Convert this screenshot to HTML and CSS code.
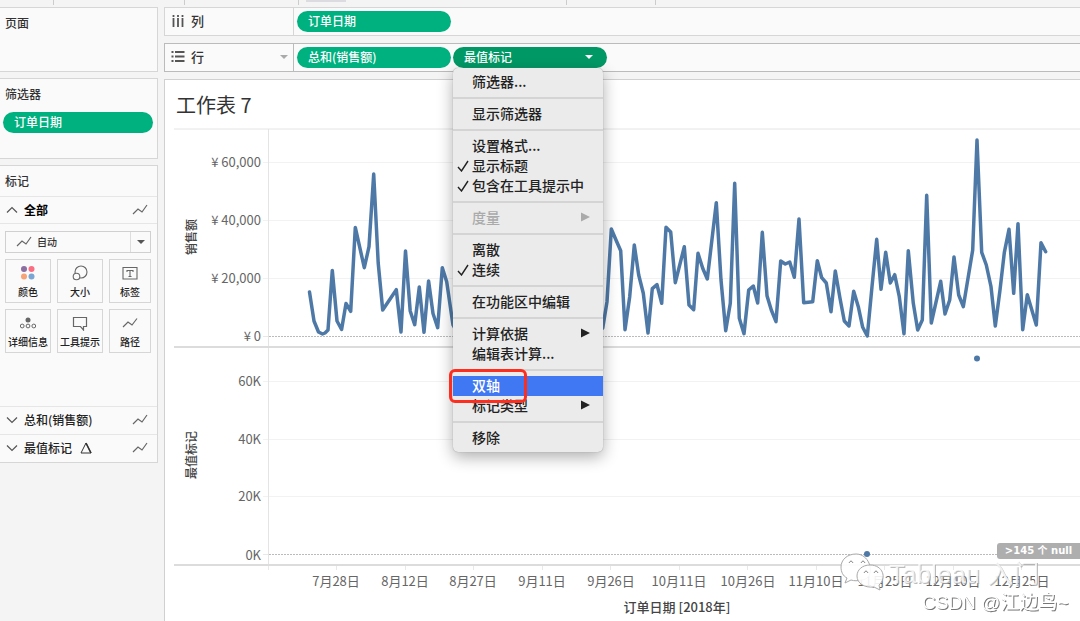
FILE: index.html
```html
<!DOCTYPE html>
<html lang="zh-CN">
<head>
<meta charset="utf-8">
<title>工作表 7</title>
<link rel="stylesheet" href="styles.css">
</head>
<body>
<svg class="defs" aria-hidden="true">
  <symbol id="line-icon" viewBox="0 0 16 12"><path d="M1 10 L6 5 L10 8 L15 1" fill="none" stroke="#666" stroke-width="1.2"/></symbol>
  <symbol id="chevron" viewBox="0 0 12 8"><path d="M1 1.5 L6 6.5 L11 1.5" fill="none" stroke="#555" stroke-width="1.2"/></symbol>
  <symbol id="check" viewBox="0 0 12 12"><path d="M1 7 L4.5 11 L11 1" fill="none" stroke="#222" stroke-width="1.4"/></symbol>
  <symbol id="arrow" viewBox="0 0 9 10"><path d="M0 0.5 L9 5 L0 9.5Z" fill="currentColor"/></symbol>
</svg>
<div class="toolbar"><span class="w53"></span><span class="w131"></span><span class="w115"></span><span class="w268"><i></i></span><span class="w89"></span></div>
<div class="workspace">
  <aside class="side">
    <section class="card pages"><h2>页面</h2></section>
    <section class="card filters"><h2>筛选器</h2><button class="pill">订单日期</button></section>
    <section class="card marks">
      <h2>标记</h2>
      <button class="row open"><svg class="chev up"><use href="#chevron"/></svg><span>全部</span><svg class="li"><use href="#line-icon"/></svg></button>
      <div class="mark-body">
        <div class="select">
          <svg class="li"><use href="#line-icon"/></svg>
          <select aria-label="标记类型"><option>自动</option></select>
          <span class="tri"></span>
        </div>
        <div class="tiles">
          <button><svg viewBox="0 0 16 16"><circle cx="4" cy="4" r="3" fill="#8a6fa0"/><circle cx="11.500" cy="4" r="3" fill="#fb6e82"/><circle cx="4" cy="11.500" r="3" fill="#f7a277"/><circle cx="11.500" cy="11.500" r="3" fill="#7ba5d2"/></svg>颜色</button>
          <button><svg viewBox="0 0 16 16"><g fill="#fafafa" stroke="#666" stroke-width="1.1"><circle cx="9" cy="7" r="6"/><circle cx="4.500" cy="11.500" r="3.300"/></g></svg>大小</button>
          <button><svg viewBox="0 0 16 16"><path d="M1 2.500H15V14H1Z M5 7V5.500H11V7 M8 5.500V11.500 M6.500 11.500H9.500" fill="none" stroke="#666" stroke-width="1.1"/></svg>标签</button>
          <button><svg viewBox="0 0 16 16"><circle cx="8" cy="5" r="2.500" fill="#666"/><g fill="none" stroke="#666"><circle cx="2.200" cy="11" r="1.900"/><circle cx="8" cy="11" r="1.900"/><circle cx="13.800" cy="11" r="1.900"/></g></svg>详细信息</button>
          <button><svg viewBox="0 0 16 16"><path d="M1.500 2.500H14.500V11.500H11.500V15L8.500 11.500H1.500Z" fill="none" stroke="#666" stroke-width="1.200"/></svg>工具提示</button>
          <button><svg viewBox="0 0 16 16"><path d="M1 12 L6 7 L10 10 L15 3.500" fill="none" stroke="#666" stroke-width="1.200"/></svg>路径</button>
        </div>
      </div>
      <button class="row"><svg class="chev"><use href="#chevron"/></svg><span>总和(销售额)</span><svg class="li"><use href="#line-icon"/></svg></button>
      <button class="row"><svg class="chev"><use href="#chevron"/></svg><span>最值标记</span><svg class="delta" viewBox="0 0 12 12"><path d="M6 1L11 11H1Z" fill="none" stroke="#333"/><path d="M6 1L11 11" stroke="#333" stroke-width="1.600"/></svg><svg class="li"><use href="#line-icon"/></svg></button>
    </section>
  </aside>
  <main class="main">
    <div class="shelf">
      <div class="shelf-label"><svg viewBox="0 0 14 14"><path d="M2.500 1V3M7 1V3M11.500 1V3M2.500 4V13M7 4V13M11.500 4V13" stroke="#555" stroke-width="1.800"/></svg>列</div>
      <div class="pills"><button class="pill">订单日期</button></div>
    </div>
    <div class="shelf active">
      <button class="shelf-label"><svg viewBox="0 0 14 14"><path d="M0.500 2H2.500M0.500 6.500H2.500M0.500 11H2.500M4 2H13.500M4 6.500H13.500M4 11H13.500" stroke="#555" stroke-width="1.800"/></svg>行<span class="tri light"></span></button>
      <div class="pills">
        <button class="pill">总和(销售额)</button>
        <div class="pill-wrap">
          <button class="pill dark">最值标记<span class="tri white"></span></button>
          <div class="menu" role="menu">
            <button role="menuitem">筛选器...</button>
            <hr>
            <button role="menuitem">显示筛选器</button>
            <hr>
            <button role="menuitem">设置格式...</button>
            <button role="menuitem"><svg class="tick"><use href="#check"/></svg>显示标题</button>
            <button role="menuitem"><svg class="tick"><use href="#check"/></svg>包含在工具提示中</button>
            <hr>
            <button role="menuitem" class="off">度量<svg class="sub"><use href="#arrow"/></svg></button>
            <hr>
            <button role="menuitem">离散</button>
            <button role="menuitem"><svg class="tick"><use href="#check"/></svg>连续</button>
            <hr>
            <button role="menuitem">在功能区中编辑</button>
            <hr>
            <button role="menuitem">计算依据<svg class="sub"><use href="#arrow"/></svg></button>
            <button role="menuitem">编辑表计算...</button>
            <hr>
            <button role="menuitem" class="on">双轴<span class="ring"></span></button>
            <button role="menuitem">标记类型<svg class="sub"><use href="#arrow"/></svg></button>
            <hr>
            <button role="menuitem">移除</button>
          </div>
        </div>
      </div>
    </div>
    <section class="view">
      <h1>工作表 7</h1>
      <svg class="chart" viewBox="165 128 915 493">
        <g class="grid">
          <path d="M263 162.500H1080M263 220.500H1080M263 278.500H1080M263 381.500H1080M263 439.500H1080M263 496.500H1080"/>
          <path class="tickmark" d="M263 336.500H268M263 554.500H268M268.500 565V570M336.500 565V570M405.500 565V570M473.500 565V570M542.500 565V570M610.500 565V570M679.500 565V570M747.500 565V570M816.500 565V570M884.500 565V570M953.500 565V570M1021.500 565V570"/>
          <path class="frame" d="M174 129H1080M268.500 129V565"/>
          <path class="rule" d="M174 347H1080M174 565H1080"/>
          <path class="zero" d="M269 336.500H1080M269 554.500H1080"/>
        </g>
        <polyline class="series" points="309.500,292 314,321 318.500,332 322.500,334 325,333 328,330 332.300,270.500 337,321 341.600,329.500 346,303.500 350.700,311.300 355.300,227.500 364.300,267.700 369,246.700 373.700,174 378.200,263 382.700,310 396.300,289.700 401,332 405.500,251 410.200,311 414.700,324.700 419.300,287 424,332.300 428.600,281 433,313.500 437.700,327.700 442.300,267.700 446.700,281.700 453,325 457,332 602.700,328.300 607,301.700 611.300,229 616,240 620.700,250.700 625,329.700 629.700,296.700 634.300,245 638.700,275 643.300,293.300 648,333 652.300,288.700 657,284.700 661.700,303.300 666,227.300 670.700,232 675.300,282.700 684.300,246.700 689,305 693.700,309.700 698,253.300 702.700,268.300 707.300,279 716.300,202.700 721,280 725.700,330.700 730.300,303.300 734.700,183.300 739.300,318.300 744,333.700 748.700,290 753.300,286 757.700,303 762.300,232.300 767,295.700 771.300,310 776,321.700 780.700,261 785.300,264 789.700,262 794.300,277.300 799,219 803.700,302.700 812.700,301.700 817.300,260.700 821.700,277.700 826.300,283 831,311.700 835.300,271 840,298.300 844.300,321 849,326 853.700,291.300 858.300,306.700 862.700,327.300 867.300,336 872,286.700 876.700,239.300 881,289.300 885.700,252.300 890.300,283 894.700,274.700 899.300,296.700 904,333.700 908.300,250.700 913.300,303.300 917.700,330 922.300,320 926.700,195.300 931.300,323 940.700,281.300 945,314 949.700,300 954,257 958.700,295 963.300,306.700 972.700,250 977,140 981.700,252.300 986.300,265 991,286.700 995.300,326 1000,290 1004.300,252.700 1009,229.300 1013.700,293.300 1018,223.700 1022.700,329.700 1027.300,294.700 1036.300,325 1041,242.700 1045.700,251.700"/>
        <circle class="dot" cx="977" cy="358.500" r="3"/>
        <circle class="dot" cx="867" cy="554" r="3"/>
        <g class="ylab">
          <text x="261" y="167">¥ 60,000</text><text x="261" y="225">¥ 40,000</text><text x="261" y="283">¥ 20,000</text><text x="261" y="341">¥ 0</text>
          <text x="261" y="386">60K</text><text x="261" y="444">40K</text><text x="261" y="501">20K</text><text x="261" y="560">0K</text>
        </g>
        <g class="xlab">
          <text x="336" y="586">7月28日</text><text x="405" y="586">8月12日</text><text x="473" y="586">8月27日</text><text x="542" y="586">9月11日</text><text x="611" y="586">9月26日</text><text x="679" y="586">10月11日</text><text x="748" y="586">10月26日</text><text x="816" y="586">11月10日</text><text x="885" y="586">11月25日</text><text x="953" y="586">12月10日</text><text x="1022" y="586">12月25日</text>
        </g>
        <g class="title">
          <text class="wide" x="677" y="612">订单日期 [2018年]</text>
          <text transform="translate(196 237) rotate(-90)">销售额</text>
          <text transform="translate(196 455) rotate(-90)">最值标记</text>
        </g>
        <g class="wechat">
          <path d="M856 554C847 554 841 560 841 567C841 572 843 576 847 578L845 583L851 580C854 581 858 581 861 580C876 580 872 554 856 554Z"/>
          <path d="M870 565C862 565 857 570 857 576C857 583 864 588 874 587L880 590L879 585C887 578 883 565 870 565Z"/>
          <path class="eyes" d="M849 563Q851 559 853 563M861 563Q863 559 865 563M864 573Q866 569 868 573M874 573Q876 569 878 573"/>
        </g>
        <text class="mark-big" x="889" y="583">Tableau 入门</text>
        <text class="mark-small" x="922" y="609">CSDN @江边鸟~</text>
      </svg>
      <button class="nulls">&gt;145 个 null</button>
    </section>
  </main>
</div>
</body>
</html>
```
FILE: styles.css
```css
* { box-sizing: border-box; }
body {
  margin: 0;
  background: #f4f4f4;
  color: #333;
  font: 12px/18px "Noto Sans CJK SC", "Noto Sans", sans-serif;
  font-weight: 500;
}
button, select { font: inherit; color: inherit; background: none; border: 0; padding: 0; text-align: left; }
h1, h2 { margin: 0; font-weight: 500; }
.defs { position: absolute; width: 0; height: 0; }

.toolbar { display: flex; height: 7px; overflow: hidden; }
.toolbar span { height: 5px; border-right: 1px solid #ccc; flex: none; }
.toolbar i { display: block; width: 40px; height: 2px; margin-left: 7px; background: #dcdce0; }
.w53 { width: 54px; }
.w131 { width: 131px; }
.w115 { width: 114px; }
.w268 { width: 268px; }
.w89 { width: 89px; }

.workspace { display: flex; gap: 6px; }
.side { flex: none; width: 158px; display: flex; flex-direction: column; gap: 6px; }
.card { background: #fafafa; border: 1px solid #d6d6d6; border-left: 0; }
.card h2 { font-size: 12px; line-height: 18px; padding: 6px 5px 0; }
.pages { height: 65px; }
.filters { height: 81px; }
.filters .pill { width: 150px; margin: 9px 3px 0; }
.marks h2 { padding-bottom: 6px; }

.pill {
  display: flex;
  align-items: center;
  width: 154px;
  height: 21px;
  padding: 0 11px 1px;
  border-radius: 11px;
  background: #00b180;
  color: #fff;
}
.dark { background: #009966; justify-content: space-between; }
.tri { flex: none; width: 0; height: 0; border: 4px solid transparent; border-top: 4px solid #555; border-bottom: 0; }
.tri.white { border-top-color: #fff; margin-right: 3px; }
.tri.light { border-top-color: #aaa; margin-left: auto; }

.row {
  display: flex;
  align-items: center;
  width: 100%;
  height: 28px;
  padding: 0 9px 1px 6px;
  border-top: 1px solid #e6e6e6;
  color: #222;
}
.row.open { border-bottom: 1px solid #e6e6e6; color: #000; font-weight: 700; padding-bottom: 0; }
.row span { margin-left: 6px; }
.chev { width: 12px; height: 8px; }
.up { transform: rotate(180deg); }
.li { width: 16px; height: 12px; }
.row .li { margin-left: auto; }
.delta { width: 12px; height: 12px; margin-left: 8px; }

.mark-body { padding: 7px 6px 53px 5px; font-size: 10px; }
.select { position: relative; height: 22px; border: 1px solid #d0d0d0; }
.select select { appearance: none; width: 100%; height: 20px; padding-left: 31px; line-height: 18px; }
.select .li { position: absolute; left: 10px; top: 4px; }
.select .tri { position: absolute; right: 5px; top: 8px; }
.select::after { content: ""; position: absolute; right: 19px; top: 0; height: 20px; border-left: 1px solid #ddd; }
.tiles { display: grid; grid-template-columns: 46px 46px 1fr; gap: 6px; padding-top: 6px; }
.tiles button {
  display: flex;
  flex-direction: column;
  align-items: center;
  height: 44px;
  padding-top: 5px;
  border: 1px solid #d6d6d6;
  line-height: 18px;
  color: #222;
  white-space: nowrap;
}
.tiles svg { width: 16px; height: 16px; flex: none; margin-bottom: 2px; }

.main { flex: 1; min-width: 0; display: flex; flex-direction: column; gap: 7px; }
.shelf { display: flex; height: 29px; border: 1px solid #d6d6d6; border-right: 0; background: #fafafa; }
.shelf-label {
  display: flex;
  align-items: center;
  gap: 6px;
  width: 129px;
  padding: 0 5px 1px 6px;
  border-right: 1px solid #d6d6d6;
  font-size: 13px;
}
.shelf-label svg { width: 14px; height: 14px; }
.active, .active .shelf-label { border-color: #bbb; }
.pills { display: flex; gap: 2px; padding: 3px; }
.pill-wrap { position: relative; height: 21px; }

.menu {
  position: absolute;
  z-index: 5;
  top: 21px;
  left: 0;
  width: 150px;
  padding: 4px 0;
  border-radius: 5px;
  background: #ebebeb;
  box-shadow: 0 0 1px #888, 0 5px 16px rgba(0, 0, 0, 0.32);
  color: #222;
}
.menu button {
  position: relative;
  display: block;
  width: 100%;
  height: 20px;
  padding: 0 0 2px 19px;
  font-size: 14px;
  line-height: 18px;
  white-space: nowrap;
}
.menu hr { height: 2px; margin: 5px 0; border: 0; background: #d4d4d4; }
.menu .off { color: #aaa; }
.menu .on { background: #4077f2; color: #fff; z-index: 1; }
.tick { position: absolute; left: 4px; top: 4px; width: 12px; height: 12px; }
.sub { position: absolute; right: 13px; top: 4px; width: 9px; height: 10px; }
.ring { position: absolute; left: -4px; top: -7px; width: 78px; height: 34px; border: 3px solid #fc2e20; border-radius: 6px; }

.view { position: relative; border: 1px solid #d0d0d0; border-width: 1px 0 0 1px; background: #fff; }
.view h1 { height: 48px; padding: 10px 11px 0; font-size: 20px; line-height: 30px; font-weight: 400; }
.chart { display: block; width: 100%; height: auto; }
.chart path { fill: none; }
.grid path { stroke: #f2f2f2; }
.grid .tickmark { stroke: #e8e8e8; }
.grid .frame { stroke: #e4e4e4; }
.grid .rule { stroke: #dcdcdc; stroke-width: 2; }
.grid .zero { stroke: #bbb; stroke-dasharray: 2 1; }
.series { fill: none; stroke: #4e79a7; stroke-width: 3.5; stroke-linejoin: round; stroke-linecap: round; }
.dot { fill: #4e79a7; }
.ylab, .xlab { fill: #666; font-size: 13px; font-weight: 400; }
.ylab { text-anchor: end; }
.xlab, .title { text-anchor: middle; }
.title { fill: #444; font-size: 12px; }
.title .wide { font-size: 13px; }
.chart .wechat path { fill: #fff; fill-opacity: 0.9; stroke: #aaa; }
.chart .wechat .eyes { fill: none; stroke: #888; }
.mark-big, .mark-small { fill: #fff; font-weight: 400; font-family: "Liberation Sans", "Noto Sans CJK SC", sans-serif; }
.mark-big { font-size: 26px; fill-opacity: 0.8; filter: drop-shadow(1px 1px 0 #aaa); }
.mark-small { font-size: 19px; filter: drop-shadow(1px 1px 0 #777); }
.nulls {
  position: absolute;
  right: 0;
  bottom: 62px;
  width: 83px;
  height: 16px;
  border-radius: 3px 0 0 3px;
  background: #aeaeae;
  color: #fff;
  font: 700 10px/16px "DejaVu Sans", "Noto Sans CJK SC", sans-serif;
  text-align: center;
}
```
